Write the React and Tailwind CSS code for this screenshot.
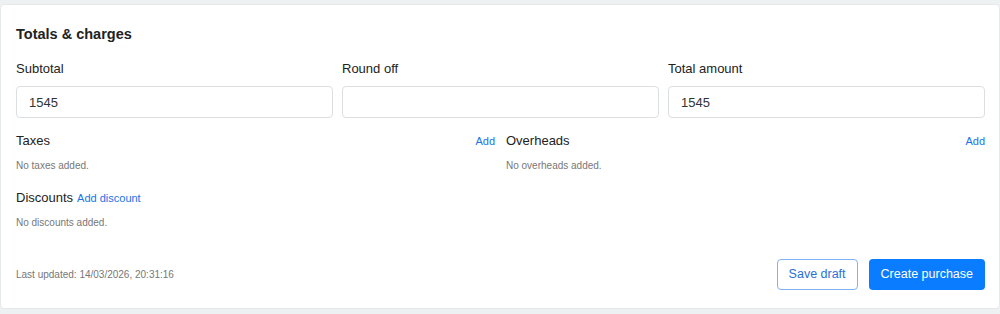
const Field = ({ label, value }) => (
    <div className="flex flex-col">
        <label className="text-[13px] leading-[18px] text-[#222]">{label}</label>
        <input
            type="text"
            defaultValue={value}
            className="mt-2 h-8 rounded-[4px] border border-[#dcdfe2] px-3 text-[13px] text-[#333] outline-none"
        />
    </div>
)

const ChargeList = ({ title, empty }) => (
    <div className="flex flex-col">
        <div className="flex items-center justify-between">
            <span className="text-[13px] leading-[18px] text-[#222]">{title}</span>
            <button className="text-[11px] text-[#1a73e8]">Add</button>
        </div>
        <p className="mt-2 text-[10px] leading-4 text-[#777]">{empty}</p>
    </div>
)

const App = () => {
    return (
        <div className="min-h-[314px] bg-[#eef1f1] pt-1 pb-[6px] font-['Liberation_Sans',Arial,sans-serif]">
            <div className="rounded-[4px] border border-[#e6e9ea] bg-white pl-[15px] pr-[14px] pt-[19px] pb-[18px]">
                <h2 className="text-[14.5px] font-bold leading-5 text-[#222]">Totals &amp; charges</h2>

                <div className="mt-4 grid grid-cols-3 gap-[9px]">
                    <Field label="Subtotal" value="1545" />
                    <Field label="Round off" value="" />
                    <Field label="Total amount" value="1545" />
                </div>

                <div className="mt-[14px] grid grid-cols-2 gap-[11px]">
                    <ChargeList title="Taxes" empty="No taxes added." />
                    <ChargeList title="Overheads" empty="No overheads added." />
                </div>

                <div className="mt-[15px] flex items-center gap-1">
                    <span className="text-[13px] leading-[18px] text-[#222]">Discounts</span>
                    <button className="text-[11px] text-[#1a73e8]">Add discount</button>
                </div>
                <p className="mt-2 text-[10px] leading-4 text-[#777]">No discounts added.</p>

                <div className="mt-[28px] flex items-center justify-between">
                    <span className="text-[10px] text-[#777]">Last updated: 14/03/2026, 20:31:16</span>
                    <div className="flex items-center gap-[11px]">
                        <button className="h-[31px] rounded-[4px] border border-[#7fb2f4] bg-white px-[11px] text-[12.5px] text-[#2a6fd8]">
                            Save draft
                        </button>
                        <button className="h-[31px] rounded-[4px] bg-[#0a7cff] px-3 text-[12.5px] text-white">
                            Create purchase
                        </button>
                    </div>
                </div>
            </div>
        </div>
    )
}

export default App
